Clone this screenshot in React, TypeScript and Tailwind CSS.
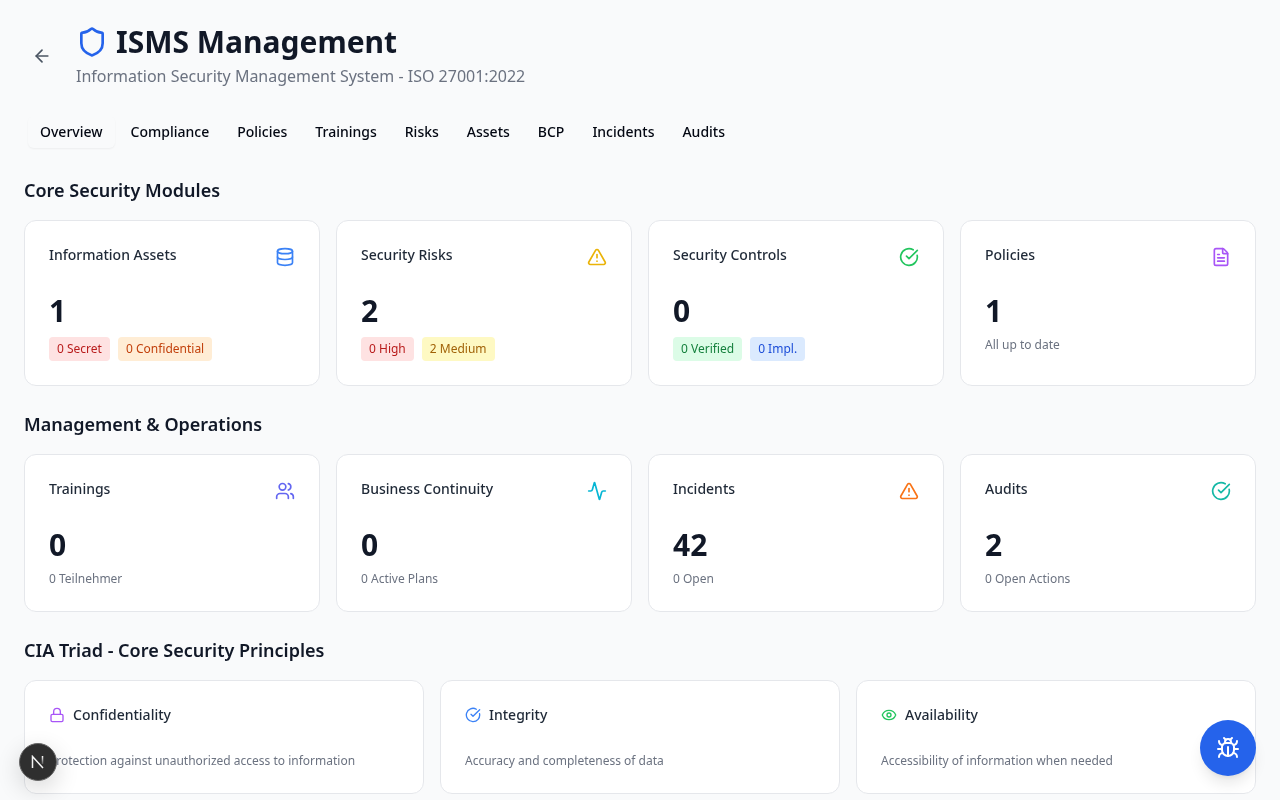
import type { ReactNode } from 'react';
import {
  Activity,
  ArrowLeft,
  Bug,
  CircleCheckBig,
  Database,
  Eye,
  FileText,
  Lock,
  Shield,
  TriangleAlert,
  Users,
} from 'lucide-react';

const tabs = ['Overview', 'Compliance', 'Policies', 'Trainings', 'Risks', 'Assets', 'BCP', 'Incidents', 'Audits'];

function Badge({ className, children }: { className: string; children: ReactNode }) {
  return <span className={`rounded px-2 py-1 text-xs ${className}`}>{children}</span>;
}

function StatCard({ title, icon, value, children }: { title: string; icon: ReactNode; value: string; children: ReactNode }) {
  return (
    <div className="rounded-xl border border-[#e5e7eb] bg-white p-6">
      <div className="flex h-12 items-start justify-between">
        <h3 className="text-sm font-medium text-[#1f2937]">{title}</h3>
        <div className="mt-0.5">{icon}</div>
      </div>
      <div className="text-3xl font-bold text-[#111827]">{value}</div>
      {children}
    </div>
  );
}

function Sub({ children }: { children: ReactNode }) {
  return <p className="mt-2 text-xs text-[#6b7280]">{children}</p>;
}

function CiaCard({ icon, title, text }: { icon: ReactNode; title: string; text: string }) {
  return (
    <div className="rounded-xl border border-[#e5e7eb] bg-white p-6">
      <div className="flex items-center gap-2">
        {icon}
        <h3 className="text-sm font-medium text-[#1f2937]">{title}</h3>
      </div>
      <p className="mt-7 text-xs text-[#6b7280]">{text}</p>
    </div>
  );
}

export default function App() {
  return (
    <div className="h-screen overflow-hidden bg-[#f9fafb] font-['Noto_Sans',sans-serif]">
      <div className="p-6 [will-change:opacity]">
        <header className="mb-6 flex items-center gap-4">
          <button className="flex h-9 w-9 items-center justify-center text-[#4b5563]">
            <ArrowLeft className="h-5 w-5" />
          </button>
          <div>
            <h1 className="flex items-center gap-2 text-3xl font-bold text-[#111827]">
              <Shield className="h-8 w-8 text-[#2563eb]" />
              ISMS Management
            </h1>
            <p className="mt-1 text-base text-[#6b7280]">Information Security Management System - ISO 27001:2022</p>
          </div>
        </header>

        <nav className="mb-6 flex h-10 items-center gap-1 p-1">
          {tabs.map((tab, i) => (
            <button
              key={tab}
              className={`h-8 rounded-md px-3 text-sm font-medium text-[#030712] ${i === 0 ? 'bg-[#f9fafb] shadow-[0_1px_2px_0_rgba(0,0,0,0.05)]' : ''}`}
            >
              {tab}
            </button>
          ))}
        </nav>

        <h2 className="mb-4 text-lg font-semibold text-[#111827]">Core Security Modules</h2>
        <div className="mb-6 grid grid-cols-4 gap-4">
          <StatCard title="Information Assets" value="1" icon={<Database className="h-5 w-5 text-[#3b82f6]" />}>
            <div className="mt-2 flex gap-2">
              <Badge className="bg-[#fee2e2] text-[#b91c1c]">0 Secret</Badge>
              <Badge className="bg-[#ffedd5] text-[#c2410c]">0 Confidential</Badge>
            </div>
          </StatCard>
          <StatCard title="Security Risks" value="2" icon={<TriangleAlert className="h-5 w-5 text-[#eab308]" />}>
            <div className="mt-2 flex gap-2">
              <Badge className="bg-[#fee2e2] text-[#b91c1c]">0 High</Badge>
              <Badge className="bg-[#fef9c3] text-[#a16207]">2 Medium</Badge>
            </div>
          </StatCard>
          <StatCard title="Security Controls" value="0" icon={<CircleCheckBig className="h-5 w-5 text-[#22c55e]" />}>
            <div className="mt-2 flex gap-2">
              <Badge className="bg-[#dcfce7] text-[#15803d]">0 Verified</Badge>
              <Badge className="bg-[#dbeafe] text-[#1d4ed8]">0 Impl.</Badge>
            </div>
          </StatCard>
          <StatCard title="Policies" value="1" icon={<FileText className="h-5 w-5 text-[#a855f7]" />}>
            <Sub>All up to date</Sub>
          </StatCard>
        </div>

        <h2 className="mb-4 text-lg font-semibold text-[#111827]">Management &amp; Operations</h2>
        <div className="mb-6 grid grid-cols-4 gap-4">
          <StatCard title="Trainings" value="0" icon={<Users className="h-5 w-5 text-[#6366f1]" />}>
            <Sub>0 Teilnehmer</Sub>
          </StatCard>
          <StatCard title="Business Continuity" value="0" icon={<Activity className="h-5 w-5 text-[#06b6d4]" />}>
            <Sub>0 Active Plans</Sub>
          </StatCard>
          <StatCard title="Incidents" value="42" icon={<TriangleAlert className="h-5 w-5 text-[#f97316]" />}>
            <Sub>0 Open</Sub>
          </StatCard>
          <StatCard title="Audits" value="2" icon={<CircleCheckBig className="h-5 w-5 text-[#14b8a6]" />}>
            <Sub>0 Open Actions</Sub>
          </StatCard>
        </div>

        <h2 className="mb-4 text-lg font-semibold text-[#111827]">CIA Triad - Core Security Principles</h2>
        <div className="grid grid-cols-3 gap-4">
          <CiaCard
            icon={<Lock className="h-4 w-4 text-[#a855f7]" />}
            title="Confidentiality"
            text="Protection against unauthorized access to information"
          />
          <CiaCard
            icon={<CircleCheckBig className="h-4 w-4 text-[#3b82f6]" />}
            title="Integrity"
            text="Accuracy and completeness of data"
          />
          <CiaCard
            icon={<Eye className="h-4 w-4 text-[#22c55e]" />}
            title="Availability"
            text="Accessibility of information when needed"
          />
        </div>
      </div>

      <button className="fixed bottom-6 right-6 flex h-14 w-14 items-center justify-center rounded-full bg-[#2563eb] text-white shadow-[0_10px_15px_-3px_rgba(0,0,0,0.1),0_4px_6px_-4px_rgba(0,0,0,0.1)]">
        <Bug className="h-6 w-6" />
      </button>

      <button className="fixed bottom-[19px] left-[19px] flex h-[38px] w-[38px] items-center justify-center rounded-full border border-[#666] bg-[#2f2f2f] shadow-[0_8px_24px_rgba(0,0,0,0.16)]">
        <svg width="14" height="14" viewBox="0 0 14 14" fill="none">
          <defs>
            <linearGradient id="next-bar" x1="0" y1="0" x2="0" y2="1">
              <stop offset="0" stopColor="#ffffff" />
              <stop offset="1" stopColor="#ffffff" stopOpacity="0.2" />
            </linearGradient>
          </defs>
          <path d="M1.5 13V1.5L12 13" stroke="#f5f5f5" strokeWidth="1.5" />
          <rect x="10.75" y="1" width="1.5" height="8" fill="url(#next-bar)" />
        </svg>
      </button>
    </div>
  );
}
